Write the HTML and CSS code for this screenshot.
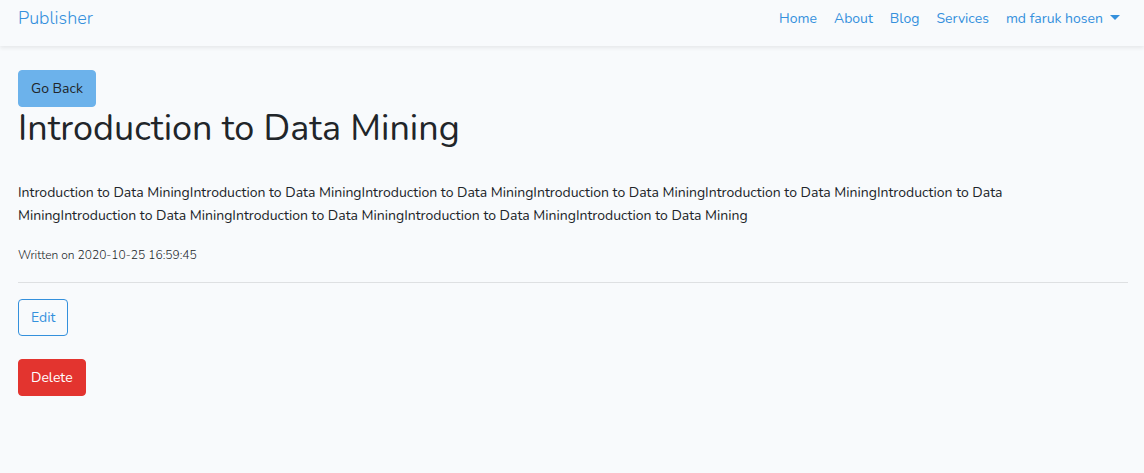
FILE: index.html
```html
<!DOCTYPE html>
<html lang="en">
<head>
<meta charset="utf-8">
<title>Introduction to Data Mining</title>
<link rel="stylesheet" href="styles.css">
</head>
<body>
<nav class="navbar">
  <a class="brand" href="#">Publisher</a>
  <ul class="nav-links">
    <li><a href="#">Home</a></li>
    <li><a href="#">About</a></li>
    <li><a href="#">Blog</a></li>
    <li><a href="#">Services</a></li>
    <li><a class="dropdown" href="#">md faruk hosen</a></li>
  </ul>
</nav>
<main class="content">
  <a class="btn btn-back" href="#">Go Back</a>
  <h1>Introduction to Data Mining</h1>
  <p class="body-text">Introduction to Data MiningIntroduction to Data MiningIntroduction to Data MiningIntroduction to Data MiningIntroduction to Data MiningIntroduction to Data MiningIntroduction to Data MiningIntroduction to Data MiningIntroduction to Data MiningIntroduction to Data Mining</p>
  <small class="written">Written on 2020-10-25 16:59:45</small>
  <hr>
  <a class="btn btn-edit" href="#">Edit</a>
  <form class="delete-form" onsubmit="return false">
    <button class="btn btn-delete" type="submit">Delete</button>
  </form>
</main>
</body>
</html>
```
FILE: styles.css
```css
*, *::before, *::after { box-sizing: border-box; }
body {
  margin: 0;
  background: #f8fafc;
  color: #212529;
  font: 400 14px/23px Nunito, "Open Sans", "Noto Sans", sans-serif;
}
a { color: #3490dc; text-decoration: none; }
.navbar {
  display: flex;
  align-items: center;
  justify-content: space-between;
  height: 46px;
  padding: 0 16px 9px 18px;
  box-shadow: 0 2px 4px rgba(0, 0, 0, 0.075);
}
.brand { font-size: 18px; font-weight: 300; }
.nav-links {
  display: flex;
  gap: 17px;
  margin: 0;
  padding: 0 8px 0 0;
  list-style: none;
}
.dropdown::after {
  content: "";
  display: inline-block;
  margin-left: 7px;
  vertical-align: 3px;
  border: 5px solid transparent;
  border-top-color: currentColor;
  border-bottom: 0;
}
.content {
  display: flex;
  flex-direction: column;
  align-items: flex-start;
  padding: 24px 16px 24px 18px;
}
.btn {
  display: block;
  padding: 6px 12px;
  border: 1px solid transparent;
  border-radius: 4px;
  font: inherit;
  cursor: pointer;
}
.btn-back { background: #6cb2eb; border-color: #6cb2eb; color: #212529; }
.btn-edit { border-color: #3490dc; }
.btn-delete { background: #e3342f; border-color: #e3342f; color: #fff; }
h1 {
  margin: 0 0 30px;
  font-size: 36px;
  font-weight: 400;
  line-height: 44px;
}
.body-text { margin: 0 0 16px; padding-right: 24px; }
.written { font-size: 12px; font-weight: 300; line-height: 24px; }
hr {
  align-self: stretch;
  margin: 15px 0 16px;
  border: 0;
  border-top: 1px solid rgba(0, 0, 0, 0.1);
}
.delete-form { margin-top: 23px; }
```
